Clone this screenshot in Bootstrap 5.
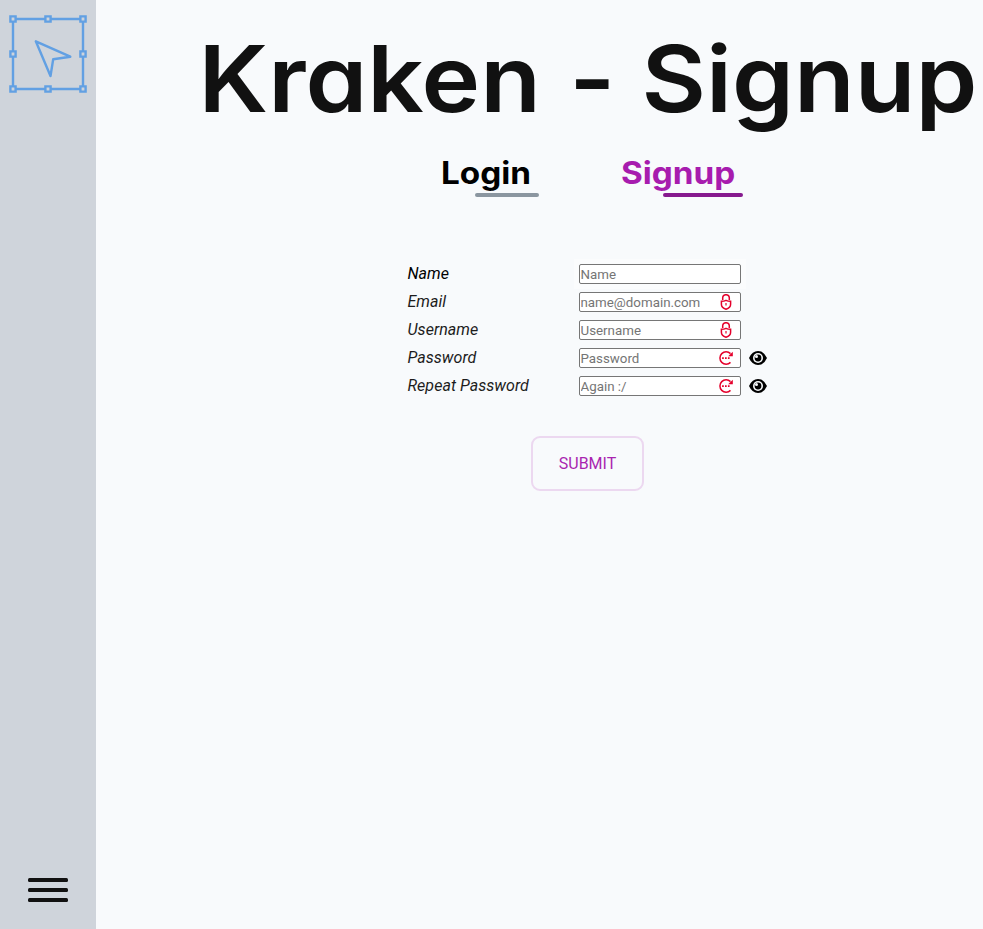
<!DOCTYPE html>
<html lang="en">
<head>
<meta charset="utf-8">
<title>Kraken - Signup</title>
<link href="https://cdn.jsdelivr.net/npm/bootstrap@5.3.0/dist/css/bootstrap.min.css" rel="stylesheet">
<style>
body{background:#f8fafc;font-family:Roboto,"Liberation Sans",sans-serif;color:#111;overflow:hidden}
.side{width:96px;height:929px;background:#cfd4db;padding:9px 0 27px}
.content-area{padding:0 0 0 96px}
.display-name,.tab{font-family:Inter,"Open Sans",sans-serif;font-feature-settings:"cv11" 1;white-space:nowrap}
.display-name{width:730px;font-size:92px;font-weight:600;line-height:120px;height:138px;padding:19px 0 0 6px;margin:0;color:#111;transform:scaleX(1.078);transform-origin:0 0}
.w1{width:344px}.w2{width:67px}
.tabs{height:60px;padding:14px 0 0 249px}
.tab{font-size:31px;font-weight:700;line-height:42px;height:45px;text-decoration:none;color:#000}
.tab span{display:block;transform:scaleX(1.074);transform-origin:0 0}
.tab::after{content:"";display:block;height:4px;border-radius:2px;background:#8b96a0;margin-top:-1px}
.tab-login{width:98px;margin-right:82px}.tab-login::after{width:64px;margin-left:34px}
.tab-signup{width:121px;color:#a71cae}.tab-signup::after{width:80px;margin-left:42px;background:#861a8e}
.fields{margin:62px 0 0 215px;width:375px}
.field-row{height:28px}
.field-row label{width:167px;padding-left:.5px;font-size:16px;letter-spacing:.04px;font-style:italic;line-height:28px;opacity:.95}
.field-row:first-child label{color:#000;opacity:1}
.halo{width:172px;height:30px;padding:5px;background:#fbfcfd}
.plain{width:172px;padding:0 5px}
.entry{width:162px;height:20px;border:1px solid #767676;border-radius:2px;background:#fff;padding:1px 1px 0 .5px;font-size:13.333px}
.entry input{border:0;outline:0;padding:0;background:none;min-width:0;width:137.5px;line-height:17px;height:17px}
.entry input::placeholder{color:#757575;opacity:1}
.entry svg{flex:none}
.eye{margin-left:3px}
.submit{width:113px;height:55px;margin:36px 0 0 339px;border:2px solid #ecd7f0;border-radius:9px;color:#a71cae;font-size:16px;font-weight:400;opacity:.97}
</style>
<script src="https://cdn.jsdelivr.net/npm/bootstrap@5.3.0/dist/js/bootstrap.bundle.min.js"></script>
</head>
<body>
<svg width="0" height="0" class="d-none">
<symbol id="lock" viewBox="0 0 16 16"><g fill="none" stroke="#e4002b" stroke-width="1.5"><path d="M4.7 6V4a3.3 3.3 0 0 1 6.6 0V6"/><path d="M3.4 7.3q2.6 0 4.6-1 2 1 4.6 1v3q0 3.6-4.6 4.9-4.6-1.3-4.6-4.9z"/></g><path d="M7.1 8.9h1.8v2.6H7.1z" fill="#e4002b" opacity=".65"/></symbol>
<symbol id="retry" viewBox="0 0 16 16"><path d="M12.5 3.6A6.2 6.2 0 1 0 12.5 12.4" fill="none" stroke="#e4002b" stroke-width="1.5"/><path d="M14.8 1.8v4.4H10.2z" fill="#e4002b"/><path d="M4.1 7.2h1.7v1.7H4.1zm2.9 0h1.7v1.7H7zm2.9 0h1.7v1.7H9.9z" fill="#e4002b"/></symbol>
<symbol id="eye" viewBox="0 0 18 16"><path d="M0 8Q3.2 1 9 1t9 7q-3.2 7-9 7T0 8z"/><circle cx="9" cy="8" r="5" fill="#f8fafc"/><circle cx="9" cy="8" r="3.4"/><circle cx="7.5" cy="6.5" r="1.5" fill="#f8fafc"/></symbol>
</svg>
<div class="d-flex">
<nav class="side d-flex flex-column justify-content-between align-items-center flex-shrink-0">
<svg width="96" height="90" viewBox="0 9 96 90" fill="none" stroke="#62a0e3" stroke-width="2.4"><path d="M13 19h70v70H13z"/><path d="M35.8 41.3 70.3 56.7 53.2 59.3 50.5 76z" stroke-linejoin="round"/><g fill="#cfd4db"><path d="M10.4 16.4h5.2v5.2h-5.2zM45.4 16.4h5.2v5.2h-5.2zM80.4 16.4h5.2v5.2h-5.2zM10.4 51.4h5.2v5.2h-5.2zM80.4 51.4h5.2v5.2h-5.2zM10.4 86.4h5.2v5.2h-5.2zM45.4 86.4h5.2v5.2h-5.2zM80.4 86.4h5.2v5.2h-5.2z"/></g></svg>
<svg width="40" height="24" viewBox="0 0 40 24" fill="#111"><rect width="40" height="4" rx="1.5"/><rect y="10" width="40" height="4" rx="1.5"/><rect y="20" width="40" height="4" rx="1.5"/></svg>
</nav>
<main class="content-area flex-grow-1">
<h1 class="display-name d-flex"><span class="w1">Kraken</span> <span class="w2">-</span> <span>Signup</span></h1>
<div class="tabs d-flex"><a href="#" class="tab tab-login"><span>Login</span></a><a href="#" class="tab tab-signup"><span>Signup</span></a></div>
<form>
<div class="fields">
<div class="field-row d-flex align-items-center"><label for="n">Name</label><div class="halo"><div class="entry d-flex"><input id="n" placeholder="Name"></div></div></div>
<div class="field-row d-flex align-items-center"><label for="e">Email</label><div class="plain"><div class="entry d-flex"><input id="e" placeholder="name@domain.com"><svg width="16" height="16"><use href="#lock"/></svg></div></div></div>
<div class="field-row d-flex align-items-center"><label for="u">Username</label><div class="plain"><div class="entry d-flex"><input id="u" placeholder="Username"><svg width="16" height="16"><use href="#lock"/></svg></div></div></div>
<div class="field-row d-flex align-items-center"><label for="p">Password</label><div class="plain"><div class="entry d-flex"><input id="p" type="password" placeholder="Password"><svg width="16" height="16"><use href="#retry"/></svg></div></div><svg class="eye" width="18" height="16"><use href="#eye"/></svg></div>
<div class="field-row d-flex align-items-center"><label for="r">Repeat Password</label><div class="plain"><div class="entry d-flex"><input id="r" type="password" placeholder="Again :/"><svg width="16" height="16"><use href="#retry"/></svg></div></div><svg class="eye" width="18" height="16"><use href="#eye"/></svg></div>
</div>
<button type="button" class="submit btn p-0">SUBMIT</button>
</form>
</main>
</div>
</body>
</html>
